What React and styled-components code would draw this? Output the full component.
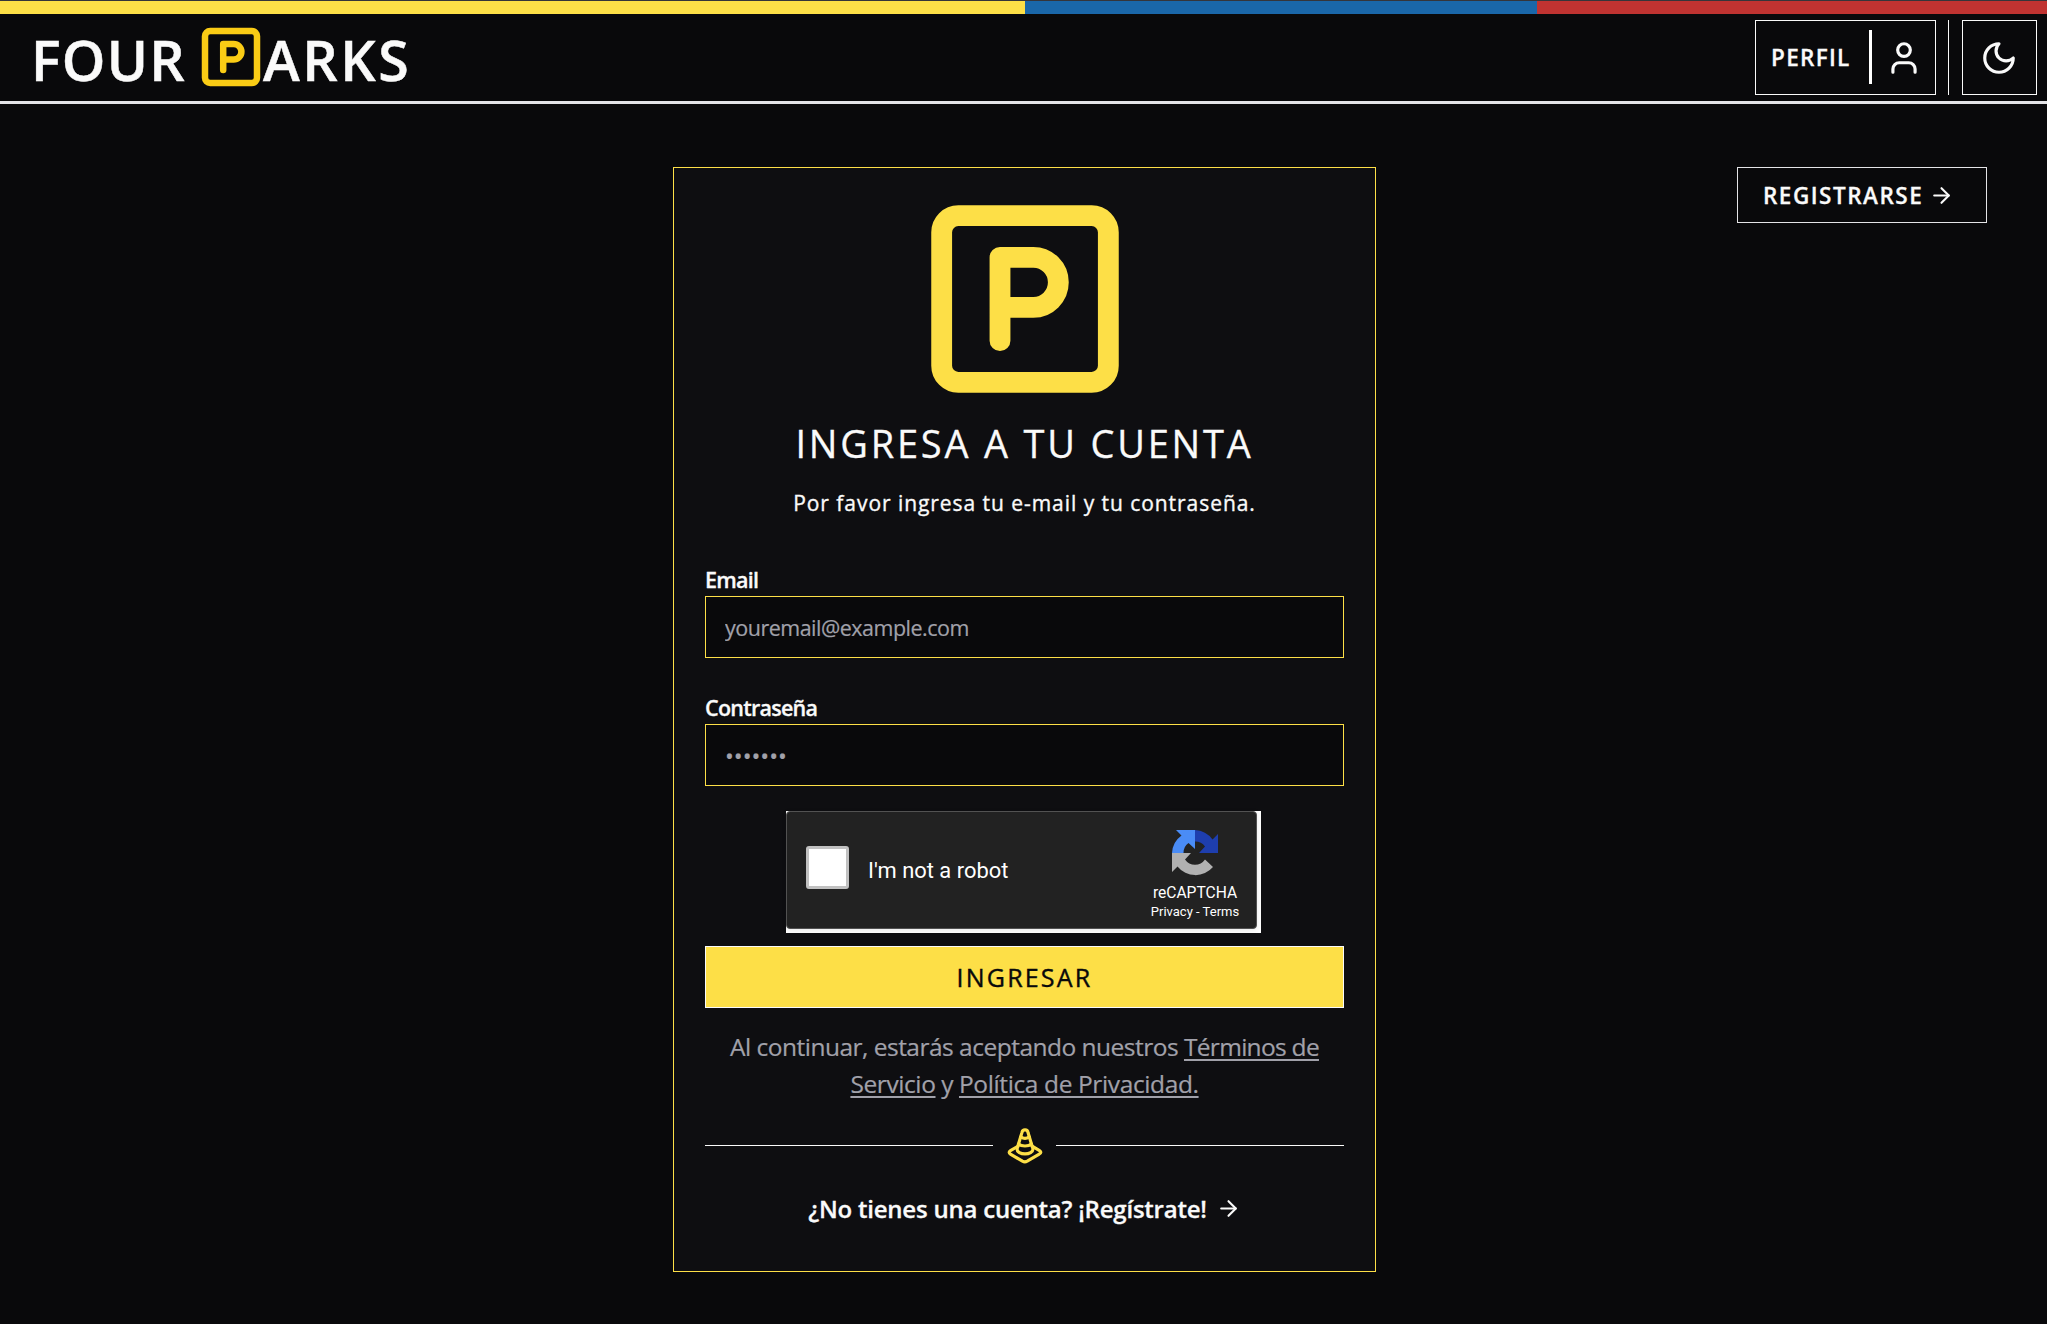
import React from "react";
import styled, { createGlobalStyle } from "styled-components";
import { User, ArrowRight } from "lucide-react";

const yellow = "#fddf47";
const blue = "#1a67a9";

const GlobalStyle = createGlobalStyle`
  *, *::before, *::after { box-sizing: border-box; }
  body { margin: 0; background: #09090b; color: #fafafa; font-family: "Open Sans", "Noto Sans", sans-serif; }
  a { color: inherit; text-decoration: none; }
`;
const Page = styled.div`
  height: 1324px; overflow: hidden; display: flex; flex-direction: column;
`;
const FlagBar = styled.div`
  height: 14px; border-top: 1px solid #35353a; display: grid; grid-template-columns: 1025px 512px 1fr;
`;
const Band = styled.span`background: ${(p) => p.$color};`;
const Header = styled.header`
  height: 90px; border-bottom: 3px solid #e4e4e7; display: flex; align-items: flex-start;
  justify-content: space-between; padding: 6px 10px 0 31px;
`;
const Brand = styled.a`
  display: flex; align-items: center; height: 75px; padding-top: 3px;
  font-size: 55.5px; line-height: 75px; font-weight: 600;
`;
const BrandWord = styled.span`
  width: ${(p) => p.$width}px; white-space: nowrap; letter-spacing: ${(p) => p.$spacing}px; -webkit-text-stroke: 0.5px;
`;
const StrokeIcon = styled.svg`
  width: ${(p) => p.$size}px; height: ${(p) => p.$size}px; flex: none;
  fill: none; stroke: currentColor; stroke-width: 2; stroke-linecap: round; stroke-linejoin: round;
`;
const BrandIcon = styled.span`display: flex; color: #facc15; margin: -5px -7px 0 -9px;`;
const Actions = styled.div`display: flex;`;
const ProfileButton = styled.a`
  width: 181px; height: 75px; border: 1px solid #fafafa; display: flex; align-items: center; padding-left: 15px;
`;
const ProfileLabel = styled.span`width: 98px; font-size: 22.5px; font-weight: 600; letter-spacing: 1.3px; line-height: 30px; padding-top: 1px; -webkit-text-stroke: 0.3px;`;
const ProfileRule = styled.span`width: 3px; height: 54px; background: #fff; margin: 0 13px 1px 0;`;
const HeaderRule = styled.span`width: 1px; height: 75px; background: #fafafa; margin: 0 13px 0 12px;`;
const ThemeButton = styled.button`
  width: 75px; height: 75px; border: 1px solid #fafafa; background: none; color: #fafafa; padding: 0 2px 0 0;
  display: flex; align-items: center; justify-content: center;
`;
const Main = styled.main`
  flex: 1; display: grid; grid-template-columns: 1fr 703px 1fr; padding: 63px 60px 0 62px; align-items: start;
`;
const RegisterButton = styled.a`
  grid-column: 3; justify-self: end; width: 250px; height: 56px; border: 1px solid #e4e4e7;
  display: flex; align-items: center; padding-left: 25px;
`;
const RegisterText = styled.span`
  width: 166px; font-size: 22.5px; line-height: 30px; font-weight: 600; white-space: nowrap;
  letter-spacing: 1.5px; padding-top: 1px; -webkit-text-stroke: 0.3px;
`;
const Card = styled.section`
  grid-column: 2; width: 703px; height: 1105px; border: 1px solid ${yellow}; background: #0e0e11; padding: 6px 31px 0;
  display: flex; flex-direction: column; align-items: center;
`;
const CardIcon = styled.span`display: flex; color: ${yellow};`;
const Title = styled.h1`
  margin: -7px 0 0; height: 52px; font-size: 38px; line-height: 52px; font-weight: 400; letter-spacing: 2.8px; white-space: nowrap;
  -webkit-text-stroke: 0.3px;
`;
const Subtitle = styled.p`
  margin: 19px 0 46px; font-size: 21px; line-height: 30px; letter-spacing: 0.95px; font-weight: 400; white-space: nowrap;
  -webkit-text-stroke: 0.35px;
`;
const Field = styled.label`
  width: 100%; display: flex; flex-direction: column; font-size: 21.5px; line-height: 32px; font-weight: 600;
  letter-spacing: -0.75px; margin-bottom: ${(p) => p.$gap}px; -webkit-text-stroke: 0.3px;
`;
const Input = styled.input`
  width: 100%; height: 62px; border: 1px solid ${yellow}; border-radius: 0; background: #09090b; padding: ${(p) => p.$top}px 19px 0;
  font: 400 ${(p) => p.$size}px "Open Sans", "Noto Sans", sans-serif; letter-spacing: ${(p) => p.$spacing}px; outline: none;
  -webkit-text-stroke: 0.2px;
  &::placeholder { color: #a1a1aa; opacity: 1; }
`;
const CaptchaFrame = styled.div`width: 475px; height: 122px; background: #fff; margin: 0 0 13px -2px; padding: 0 4px 4px 0;`;
const Captcha = styled.div`
  width: 471px; height: 118px; border: 1px solid #525252; border-radius: 4px; background: #222; color: #fff;
  font-family: Roboto, sans-serif; display: flex; align-items: center; padding: 0 16px 5px 19px; box-shadow: 0 1px 4px 1px #0001;
`;
const Check = styled.span`width: 43px; height: 43px; background: #fff; border: 3px solid #c1c1c1; border-radius: 3px;`;
const CaptchaText = styled.span`font-size: 21.9px; line-height: 28px; margin: 7px 0 0 19px;`;
const CaptchaBrand = styled.div`
  margin-left: auto; width: 90px; display: flex; flex-direction: column; align-items: center; align-self: flex-start; padding-top: 18px;
`;
const CaptchaName = styled.span`font-size: 15.6px; line-height: 18px; margin-top: 8px; white-space: nowrap;`;
const CaptchaLinks = styled.span`font-size: 13px; line-height: 16px; margin-top: 2px; white-space: nowrap;`;
const Submit = styled.button`
  width: 100%; height: 62px; border: 1px solid #fafafa; background: ${yellow}; color: #09090b; padding: 0; flex: none;
  font: 400 25px "Open Sans", "Noto Sans", sans-serif; letter-spacing: 2.2px; -webkit-text-stroke: 0.4px;
`;
const Terms = styled.p`
  margin: 20px 0 0; color: #a1a1aa; font-size: 24.5px; line-height: 37px; text-align: center; white-space: nowrap;
  letter-spacing: -0.51px; -webkit-text-stroke: 0.2px;
`;
const TermsLink = styled.a`
  text-decoration: underline; text-decoration-thickness: 2px; text-underline-offset: 3px; letter-spacing: ${(p) => p.$spacing}px;
`;
const Divider = styled.div`
  width: 100%; height: 38px; display: flex; align-items: center; gap: 12.5px; margin-top: 24px; color: ${yellow};
  svg { margin-top: 1px; }
`;
const Line = styled.span`height: 1px; flex: 1; background: #fafafa;`;
const SignUp = styled.a`
  display: flex; align-items: center; gap: 9px; margin-top: 27px; font-size: 24px; line-height: 36px; font-weight: 600;
  letter-spacing: -0.22px; white-space: nowrap; -webkit-text-stroke: 0.3px;
  svg { margin-bottom: 1px; }
`;

function ParkingIcon({ size }) {
  return (
    <StrokeIcon $size={size} viewBox="0 0 24 24">
      <rect x="4" y="4" width="16" height="16" rx="1.6" />
      <path d="M9.6 16V8h3.2a2.4 2.4 0 0 1 0 4.8H9.6" />
    </StrokeIcon>
  );
}

function MoonIcon() {
  return (
    <StrokeIcon $size={38} viewBox="0 0 24 24">
      <path d="M12 3a6 6 0 0 0 9 9 9 9 0 1 1-9-9Z" />
    </StrokeIcon>
  );
}

function ConeIcon() {
  return (
    <StrokeIcon $size={38} viewBox="0 0 24 24">
      <path d="M9.3 6.2a4.55 4.55 0 0 0 5.4 0" />
      <path d="M7.9 10.7c.9.8 2.4 1.3 4.1 1.3s3.2-.5 4.1-1.3" />
      <path d="M13.9 3.5a1.93 1.93 0 0 0-3.8-.1l-3 10c-.1.2-.1.4-.1.6 0 1.7 2.2 3 5 3s5-1.3 5-3c0-.2 0-.4-.1-.5Z" />
      <path d="m7.5 12.2-4.7 2.7c-.5.3-.8.7-.8 1.1s.3.8.8 1.1l7.6 4.5c.9.5 2.1.5 3 0l7.6-4.5c.7-.3 1-.7 1-1.1s-.3-.8-.8-1.1l-4.7-2.8" />
    </StrokeIcon>
  );
}

function CaptchaLogo() {
  return (
    <svg width="46" height="46" viewBox="0 0 46 46">
      <path d="M46 23V4L40.5 9.5A23 23 0 0 0 23 0V11.5A12 12 0 0 1 33 16.5L27 23Z" fill="#1e3eae" />
      <path d="M23 0H4L9.5 5.5A23 23 0 0 0 0 23H11.5A12 12 0 0 1 16.5 13L23 19Z" fill="#4a8cf6" />
      <path d="M0 23V42L5.5 36.5A23 23 0 0 0 41 37L33 29.5A12 12 0 0 1 13 29.5L19 23Z" fill="#b1b1b1" />
    </svg>
  );
}

export default function App() {
  return (
    <Page>
      <GlobalStyle />
      <FlagBar><Band $color={yellow} /><Band $color={blue} /><Band $color="#c03331" /></FlagBar>
      <Header>
        <Brand href="#">
          <BrandWord $width={170} $spacing={1.3}>FOUR</BrandWord>
          <BrandIcon><ParkingIcon size={78} /></BrandIcon>
          <BrandWord $width={160} $spacing={2.6}>ARKS</BrandWord>
        </Brand>
        <Actions>
          <ProfileButton href="#"><ProfileLabel>PERFIL</ProfileLabel><ProfileRule /><User size={38} strokeWidth={2} /></ProfileButton>
          <HeaderRule />
          <ThemeButton aria-label="Tema"><MoonIcon /></ThemeButton>
        </Actions>
      </Header>
      <Main>
        <Card>
          <CardIcon><ParkingIcon size={250} /></CardIcon>
          <Title>INGRESA A TU CUENTA</Title>
          <Subtitle>Por favor ingresa tu e-mail y tu contraseña.</Subtitle>
          <Field $gap={34}>Email<Input $top={0} $size={21.5} $spacing={-0.5} placeholder="youremail@example.com" /></Field>
          <Field $gap={25}>Contraseña<Input $top={2} $size={23.5} $spacing={0} placeholder="•••••••" /></Field>
          <CaptchaFrame>
            <Captcha>
              <Check />
              <CaptchaText>I'm not a robot</CaptchaText>
              <CaptchaBrand><CaptchaLogo /><CaptchaName>reCAPTCHA</CaptchaName><CaptchaLinks>Privacy - Terms</CaptchaLinks></CaptchaBrand>
            </Captcha>
          </CaptchaFrame>
          <Submit>INGRESAR</Submit>
          <Terms>
            Al continuar, estarás aceptando nuestros{" "}
            <TermsLink href="#" $spacing={-0.7}>Términos de</TermsLink><br />
            <TermsLink href="#" $spacing={-0.4}>Servicio</TermsLink> y{" "}
            <TermsLink href="#" $spacing={-0.38}>Política de Privacidad.</TermsLink>
          </Terms>
          <Divider><Line /><ConeIcon /><Line /></Divider>
          <SignUp href="#">¿No tienes una cuenta? ¡Regístrate!<ArrowRight size={25} strokeWidth={2} /></SignUp>
        </Card>
        <RegisterButton href="#"><RegisterText>REGISTRARSE</RegisterText><ArrowRight size={25} strokeWidth={2} /></RegisterButton>
      </Main>
    </Page>
  );
}
